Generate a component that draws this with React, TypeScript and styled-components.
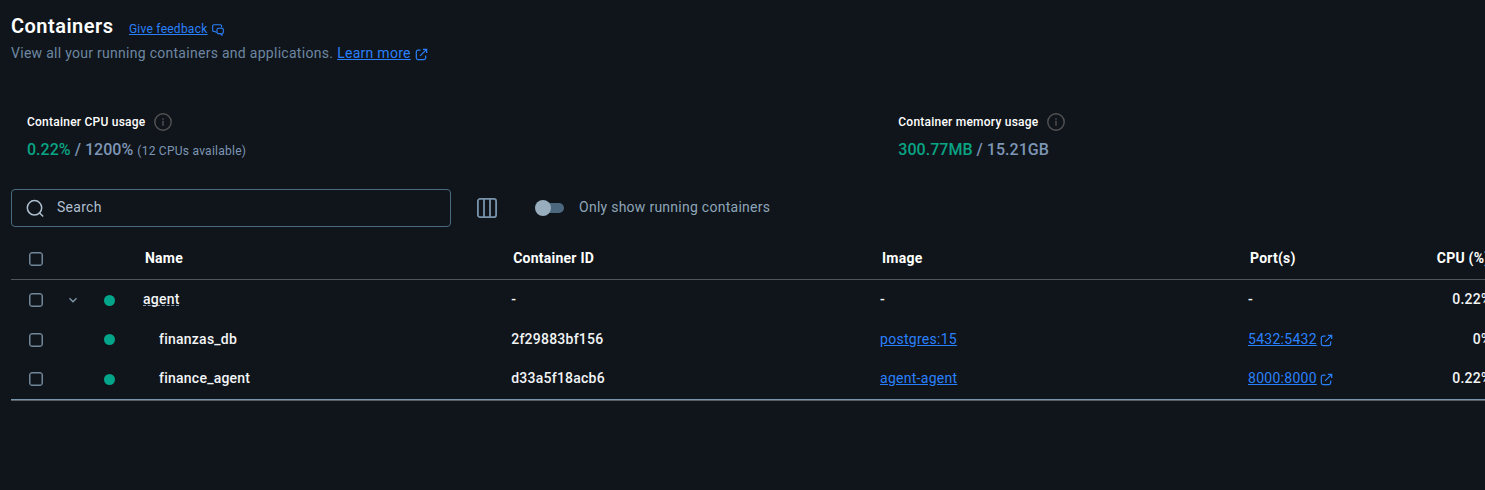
import React from "react";
import styled, { createGlobalStyle } from "styled-components";

const GlobalStyle = createGlobalStyle`
  * { box-sizing: border-box; }
  html, body { margin: 0; background: #10151b; overflow: hidden; }
  body { font-family: Roboto, "Liberation Sans", sans-serif; font-size: 14px; color: #fff; }
`;

const Page = styled.main`
  height: 490px;
  padding: 11px 0 0 11px;
  overflow: hidden;
  background: #10151b;
`;

const TitleRow = styled.div`
  display: flex;
  align-items: center;
  height: 30px;
  gap: 15.5px;
`;

const Title = styled.h1`
  margin: 0;
  font-size: 20px;
  font-weight: 600;
  line-height: 30px;
  letter-spacing: 0.48px;
`;

const Link = styled.a<{ $size?: number; $spacing?: number }>`
  color: #2a80fc;
  font-size: ${(p) => p.$size ?? 14}px;
  font-weight: 400;
  letter-spacing: ${(p) => p.$spacing ?? 0.28}px;
  text-decoration: underline;
`;

const LinkGroup = styled.span<{ $gap?: number; $top?: number; $iconTop?: number }>`
  display: inline-flex;
  align-items: center;
  gap: ${(p) => p.$gap ?? 4}px;
  padding-top: ${(p) => p.$top ?? 0}px;
  color: #2a80fc;

  svg { margin-top: ${(p) => p.$iconTop ?? 2}px; }
`;

const Subtitle = styled.p`
  display: flex;
  align-items: center;
  margin: 0;
  height: 24px;
  gap: 4px;
  color: #6d87a2;
  letter-spacing: 0.28px;
`;

const Stats = styled.section`
  display: flex;
  margin-top: 46px;
  padding-left: 16px;
`;

const Stat = styled.div`
  width: 871.3px;
  flex: none;
`;

const StatLabel = styled.div`
  display: flex;
  align-items: center;
  gap: 9px;
  height: 22px;
  font-size: 12px;
  font-weight: 500;
  letter-spacing: 0.23px;
  color: #fff;

  svg { color: #535353; }
`;

const StatValue = styled.div`
  height: 32px;
  line-height: 34px;
  font-size: 16px;
  font-weight: 500;
  letter-spacing: 0.03px;
  color: #7d96b5;
  white-space: nowrap;
`;

const Used = styled.span`
  color: #09a484;
`;

const Note = styled.small`
  font-size: 12px;
  font-weight: 400;
  letter-spacing: 0.25px;
`;

const Toolbar = styled.div`
  display: flex;
  align-items: center;
  height: 38px;
  margin-top: 24px;
  color: #8ea5b8;
`;

const SearchBox = styled.label`
  display: flex;
  align-items: center;
  width: 440px;
  height: 38px;
  padding-left: 14px;
  gap: 12px;
  border: 1px solid #4a6a80;
  border-radius: 4px;
  color: #b0bfcf;
  letter-spacing: 0.28px;

  span { padding-bottom: 2px; }
`;

const ColumnsButton = styled.span`
  display: flex;
  margin-left: 25px;
`;

const Switch = styled.span`
  display: flex;
  align-items: center;
  width: 29px;
  height: 16px;
  margin-left: 37px;

  &::before {
    content: "";
    width: 16px;
    height: 16px;
    border-radius: 50%;
    background: #98adbe;
    z-index: 1;
  }

  &::after {
    content: "";
    width: 21px;
    height: 10px;
    margin-left: -8px;
    border-radius: 5px;
    background: #4b687e;
  }
`;

const SwitchLabel = styled.span`
  margin-left: 15px;
  padding-bottom: 2px;
  letter-spacing: 0.26px;
`;

const Table = styled.div`
  width: 1600px;
  margin-top: 13px;
  border-bottom: 1px solid #5a5d61;
`;

const Row = styled.div<{ $height: number; $header?: boolean; $last?: boolean }>`
  display: grid;
  grid-template-columns: 50px 24px 50px 368.2px 368.8px 368px 160px 91.5px;
  height: ${(p) => p.$height}px;
  padding-bottom: ${(p) => (p.$header ? 2 : 0)}px;
  font-weight: ${(p) => (p.$header ? 700 : 500)};
  letter-spacing: 0.24px;
  color: ${(p) => (p.$header ? "#fff" : "#f2f4f6")};
  border-bottom: ${(p) => (p.$header ? "1px solid #505357" : p.$last ? "1px solid #7595aa" : "none")};
`;

const Cell = styled.div<{ $indent?: number; $end?: number }>`
  display: flex;
  align-items: center;
  justify-content: ${(p) => (p.$end === undefined ? "flex-start" : "flex-end")};
  padding: 0 ${(p) => p.$end ?? 0}px 2px ${(p) => p.$indent ?? 8}px;
  white-space: nowrap;
`;

const IconCell = styled.div`
  display: flex;
  align-items: center;
  justify-content: center;
  color: #7f97aa;
`;

const Checkbox = styled.span`
  width: 14px;
  height: 14px;
  border: 1px solid #71879a;
  border-radius: 3px;
  box-shadow: inset 0 0 0 0.5px #71879a;
`;

const Dot = styled.span`
  width: 11px;
  height: 11px;
  margin-right: 1px;
  border-radius: 50%;
  background: #03a58a;
`;

const GroupName = styled.span`
  text-decoration: underline dashed #8299b3 1px;
  text-underline-offset: 1px;
  text-decoration-skip-ink: none;
`;

const ExternalIcon = () => (
  <svg width="13" height="13" viewBox="0 0 14 14" fill="none" stroke="currentColor" strokeWidth="1.3">
    <path d="M6 2.2H3.4A2 2 0 0 0 1.4 4.200V10.600A2 2 0 0 0 3.400 12.600H9.500A2 2 0 0 0 11.500 10.600V8" />
    <path d="M5.500 8.500L12.500 1.500M8.500 1.400H12.600V5.500" />
  </svg>
);

const FeedbackIcon = () => (
  <svg width="12" height="12" viewBox="0 0 12 12" fill="none" stroke="currentColor" strokeWidth="1.1">
    <path d="M4.600 8.600L3 7.500H2A1.300 1.300 0 0 1 .7 6.200V2A1.300 1.300 0 0 1 2 .7H8.300A1.300 1.300 0 0 1 9.600 2V3.500" />
    <path d="M6.300 4.300H10A1.300 1.300 0 0 1 11.300 5.600V8.300A1.300 1.300 0 0 1 10 9.600V11.200L8.300 9.600H6.300A1.300 1.300 0 0 1 5 8.300V5.600A1.300 1.300 0 0 1 6.300 4.300Z" />
  </svg>
);

const InfoIcon = () => (
  <svg width="18" height="18" viewBox="0 0 18 18" fill="none" stroke="currentColor" strokeWidth="1.4">
    <circle cx="9" cy="9" r="8.200" />
    <path d="M9 7.700V12.800M9 5.200V6.700" />
  </svg>
);

const SearchIcon = () => (
  <svg width="19" height="19" viewBox="0 0 19 19" fill="none" stroke="currentColor" strokeWidth="1.5">
    <circle cx="8.500" cy="8.800" r="7.200" />
    <path d="M13.500 14L17.200 17.500" />
  </svg>
);

const ColumnsIcon = () => (
  <svg width="22" height="22" viewBox="0 0 22 22" fill="none" stroke="#7893ab" strokeWidth="1.800">
    <rect x="1.900" y="1.900" width="18.200" height="18.200" rx="2.200" />
    <path d="M8 2V20M14 2V20" />
  </svg>
);

const ChevronIcon = () => (
  <svg width="10" height="10" viewBox="0 0 10 10" fill="none" stroke="currentColor" strokeWidth="1.4">
    <path d="M1.500 3.200L5 6.700L8.500 3.200" />
  </svg>
);

const containers = [
  { name: "finanzas_db", id: "2f29883bf156", image: "postgres:15", port: "5432:5432", cpu: "0%", height: 39 },
  { name: "finance_agent", id: "d33a5f18acb6", image: "agent-agent", port: "8000:8000", cpu: "0.22%", height: 41 },
];

export default function App() {
  return (
    <>
      <GlobalStyle />
      <Page>
        <TitleRow>
          <Title>Containers</Title>
          <LinkGroup $top={5}>
            <Link $size={12} $spacing={0.25}>Give feedback</Link>
            <FeedbackIcon />
          </LinkGroup>
        </TitleRow>
        <Subtitle>
          View all your running containers and applications.
          <LinkGroup>
            <Link>Learn more</Link>
            <ExternalIcon />
          </LinkGroup>
        </Subtitle>

        <Stats>
          <Stat>
            <StatLabel>Container CPU usage <InfoIcon /></StatLabel>
            <StatValue>
              <Used>0.22%</Used> / 1200% <Note>(12 CPUs available)</Note>
            </StatValue>
          </Stat>
          <Stat>
            <StatLabel>Container memory usage <InfoIcon /></StatLabel>
            <StatValue>
              <Used>300.77MB</Used> / 15.21GB
            </StatValue>
          </Stat>
        </Stats>

        <Toolbar>
          <SearchBox>
            <SearchIcon />
            <span>Search</span>
          </SearchBox>
          <ColumnsButton><ColumnsIcon /></ColumnsButton>
          <Switch />
          <SwitchLabel>Only show running containers</SwitchLabel>
        </Toolbar>

        <Table>
          <Row $height={40} $header>
            <IconCell><Checkbox /></IconCell>
            <IconCell />
            <IconCell />
            <Cell $indent={10}>Name</Cell>
            <Cell $indent={10}>Container ID</Cell>
            <Cell $indent={10}>Image</Cell>
            <Cell $indent={10}>Port(s)</Cell>
            <Cell $end={2}>CPU (%)</Cell>
          </Row>
          <Row $height={40}>
            <IconCell><Checkbox /></IconCell>
            <IconCell><ChevronIcon /></IconCell>
            <IconCell><Dot /></IconCell>
            <Cell><GroupName>agent</GroupName></Cell>
            <Cell>-</Cell>
            <Cell>-</Cell>
            <Cell>-</Cell>
            <Cell $end={0}>0.22%</Cell>
          </Row>
          {containers.map((c, i) => (
            <Row key={c.id} $height={c.height} $last={i === containers.length - 1}>
              <IconCell><Checkbox /></IconCell>
              <IconCell />
              <IconCell><Dot /></IconCell>
              <Cell $indent={24}>{c.name}</Cell>
              <Cell>{c.id}</Cell>
              <Cell><Link>{c.image}</Link></Cell>
              <Cell>
                <LinkGroup $gap={3.3} $iconTop={3}>
                  <Link>{c.port}</Link>
                  <ExternalIcon />
                </LinkGroup>
              </Cell>
              <Cell $end={0}>{c.cpu}</Cell>
            </Row>
          ))}
        </Table>
      </Page>
    </>
  );
}
